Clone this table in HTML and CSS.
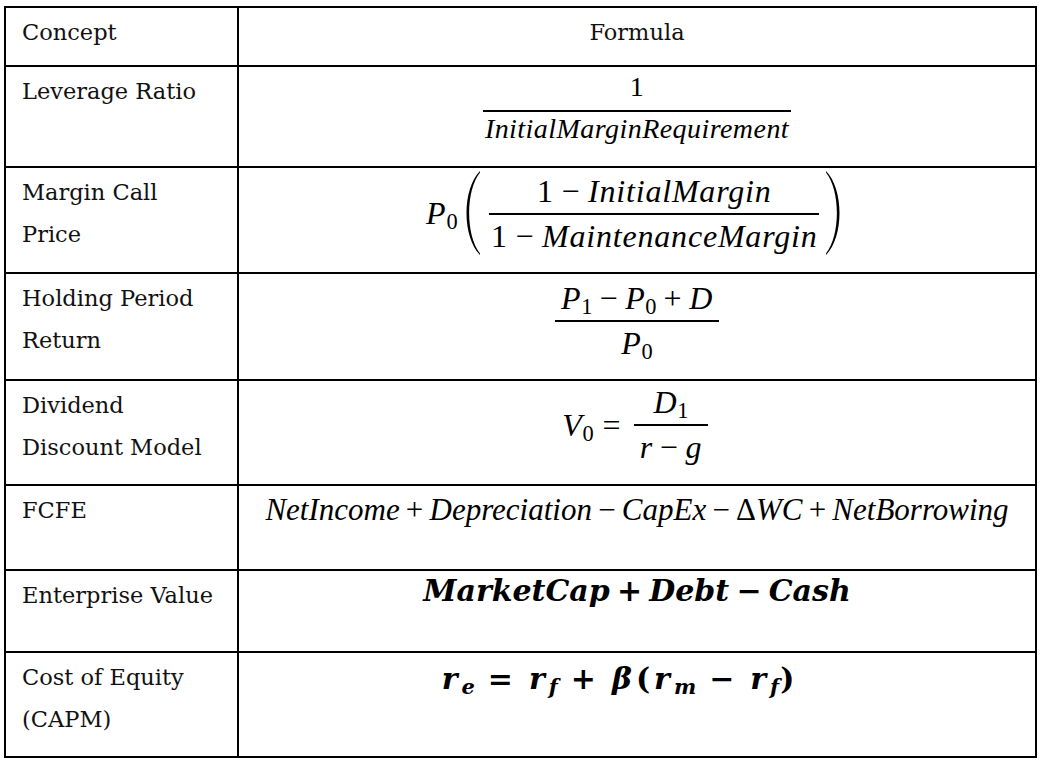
FILE: index.html
```html
<!DOCTYPE html>
<html lang="en">
<head>
<meta charset="utf-8">
<title>Investment formulas</title>
<link rel="stylesheet" href="styles.css">
</head>
<body>
<div class="sheet">
  <table class="formula-table">
    <colgroup>
      <col class="col-concept">
      <col class="col-formula">
    </colgroup>
    <thead>
      <tr class="row-head">
        <th class="concept">Concept</th>
        <th class="formula-head">Formula</th>
      </tr>
    </thead>
    <tbody>
      <tr class="row-lev">
        <td class="concept">Leverage Ratio</td>
        <td class="formula">
          <div class="eq eq-sm pad-lev">
            <span class="frac frac-sm">
              <span class="num"><span class="rm">1</span></span>
              <span class="den">InitialMarginRequirement</span>
            </span>
          </div>
        </td>
      </tr>
      <tr class="row-mc">
        <td class="concept">Margin Call<br>Price</td>
        <td class="formula">
          <div class="eq eq-mc pad-mc">
            <span class="run">P<span class="sub rm">0</span></span>
            <svg class="paren paren-l" viewBox="0 0 16 84" width="16" height="84" aria-hidden="true"><path d="M16 0 C-2 18 -2 66 16 84 L16 82.5 C1.5 64 1.5 20 16 1.5 Z"/></svg>
            <span class="frac frac-lg">
              <span class="num"><span class="rm">1</span><span class="op">−</span>InitialMargin</span>
              <span class="den"><span class="rm">1</span><span class="op">−</span>MaintenanceMargin</span>
            </span>
            <svg class="paren paren-r" viewBox="0 0 16 84" width="16" height="84" aria-hidden="true"><path d="M0 0 C18 18 18 66 0 84 L0 82.5 C14.5 64 14.5 20 0 1.5 Z"/></svg>
          </div>
        </td>
      </tr>
      <tr class="row-hpr">
        <td class="concept">Holding Period<br>Return</td>
        <td class="formula">
          <div class="eq eq-lg pad-hpr">
            <span class="frac frac-lg frac-wide">
              <span class="num">P<span class="sub rm">1</span><span class="op">−</span>P<span class="sub rm">0</span><span class="op">+</span>D</span>
              <span class="den">P<span class="sub rm">0</span></span>
            </span>
          </div>
        </td>
      </tr>
      <tr class="row-ddm">
        <td class="concept">Dividend<br>Discount Model</td>
        <td class="formula">
          <div class="eq eq-lg pad-ddm">
            <span class="run">V<span class="sub rm">0</span></span>
            <span class="run rel">=</span>
            <span class="frac frac-lg frac-wide">
              <span class="num">D<span class="sub rm">1</span></span>
              <span class="den">r<span class="op">−</span>g</span>
            </span>
          </div>
        </td>
      </tr>
      <tr class="row-fcfe">
        <td class="concept">FCFE</td>
        <td class="formula">
          <div class="eq eq-fcfe pad-fcfe">
            <span class="run">NetIncome<span class="op">+</span>Depreciation<span class="op">−</span>CapEx<span class="op">−</span><span class="rm">Δ</span>WC<span class="op">+</span>NetBorrowing</span>
          </div>
        </td>
      </tr>
      <tr class="row-ev">
        <td class="concept">Enterprise Value</td>
        <td class="formula">
          <div class="eq eq-bold pad-ev">
            <span class="run">MarketCap<span class="op">+</span>Debt<span class="op">−</span>Cash</span>
          </div>
        </td>
      </tr>
      <tr class="row-coe">
        <td class="concept">Cost of Equity<br>(CAPM)</td>
        <td class="formula">
          <div class="eq eq-bold eq-coe pad-coe">
            <span class="run">r<span class="sub">e</span><span class="op rel">=</span>r<span class="sub">f</span><span class="op">+</span>β<span class="rm">(</span>r<span class="sub">m</span><span class="op">−</span>r<span class="sub">f</span><span class="rm">)</span></span>
          </div>
        </td>
      </tr>
    </tbody>
  </table>
</div>
</body>
</html>
```

FILE: styles.css
```css
html, body {
  margin: 0;
  padding: 0;
  background: #ffffff;
}

body {
  font-family: "DejaVu Serif", "Liberation Serif", serif;
  color: #111;
}

.sheet {
  padding: 6px 0 0 4px;
}

.formula-table {
  border-collapse: collapse;
  table-layout: fixed;
  width: 1033px;
  border: 2px solid #000;
}

.formula-table th,
.formula-table td {
  border: 2px solid #000;
  vertical-align: top;
  padding: 0;
}

.col-concept { width: 233px; }

.concept {
  text-align: left;
  font-weight: normal;
  font-size: 22.5px;
  line-height: 42px;
  padding: 3px 10px 0 16px !important;
}

.formula-head {
  text-align: center;
  font-weight: normal;
  font-size: 22.5px;
  line-height: 42px;
  padding-top: 3px !important;
}

/* row heights */
.row-head { height: 59px; }
.row-lev  { height: 101px; }
.row-mc   { height: 106px; }
.row-hpr  { height: 107px; }
.row-ddm  { height: 105px; }
.row-fcfe { height: 85px; }
.row-ev   { height: 82px; }
.row-coe  { height: 105px; }

/* math */
.eq {
  display: flex;
  justify-content: center;
  align-items: center;
  font-family: "Liberation Serif", serif;
  font-style: italic;
  line-height: 1;
  color: #000;
  white-space: nowrap;
}

.eq-sm { font-size: 28px; letter-spacing: 0.45px; }
.eq-mc { font-size: 32px; letter-spacing: 0.8px; padding-right: 6px; }
.eq-lg { font-size: 32px; letter-spacing: 0.6px; }
.eq-fcfe { font-size: 31px; }
.eq-bold {
  font-family: "DejaVu Serif", serif;
  font-weight: bold;
  font-size: 30px;
}

.run { display: block; }

.rm { font-style: normal; }

.sub {
  font-size: 0.7em;
  line-height: 0;
  vertical-align: -0.22em;
  letter-spacing: 0;
}

.op {
  font-style: normal;
  margin: 0 0.24em;
}

.eq-lg .op { margin: 0 0.22em; }
.eq-fcfe .op { margin: 0 0.2em; }

.rel { margin: 0 0.28em; font-style: normal; }

.eq-coe { letter-spacing: 4px; padding-right: 34px; }
.eq-coe .op { margin: 0 0.4em; }
.eq-coe .sub { letter-spacing: 1px; }

.frac {
  display: flex;
  flex-direction: column;
  align-items: stretch;
  margin: 0 0.12em;
}

.frac .num,
.frac .den {
  display: block;
  text-align: center;
  padding-left: 0.05em;
  padding-right: 0.05em;
}

.frac-wide .num,
.frac-wide .den {
  padding-left: 0.18em;
  padding-right: 0.18em;
}

.frac .num { border-bottom: 2px solid #000; }

.frac-sm .num { padding-bottom: 9px; }
.frac-sm .den { padding-top: 3px; }

.frac-lg .num { padding-bottom: 6px; }
.frac-lg .den { padding-top: 5px; }

.paren { display: block; fill: #000; }
.paren-l { margin: 0 6px 0 6px; }
.paren-r { margin: 0 0 0 3px; }

/* vertical placement in formula cells */
.pad-lev  { padding-top: 6px; }
.pad-mc   { padding-top: 3px; }
.pad-hpr  { padding-top: 8px; }
.pad-ddm  { padding-top: 5px; }
.pad-fcfe { padding-top: 8px; }
.pad-ev   { padding-top: 5px; }
.pad-coe  { padding-top: 11px; }
```
